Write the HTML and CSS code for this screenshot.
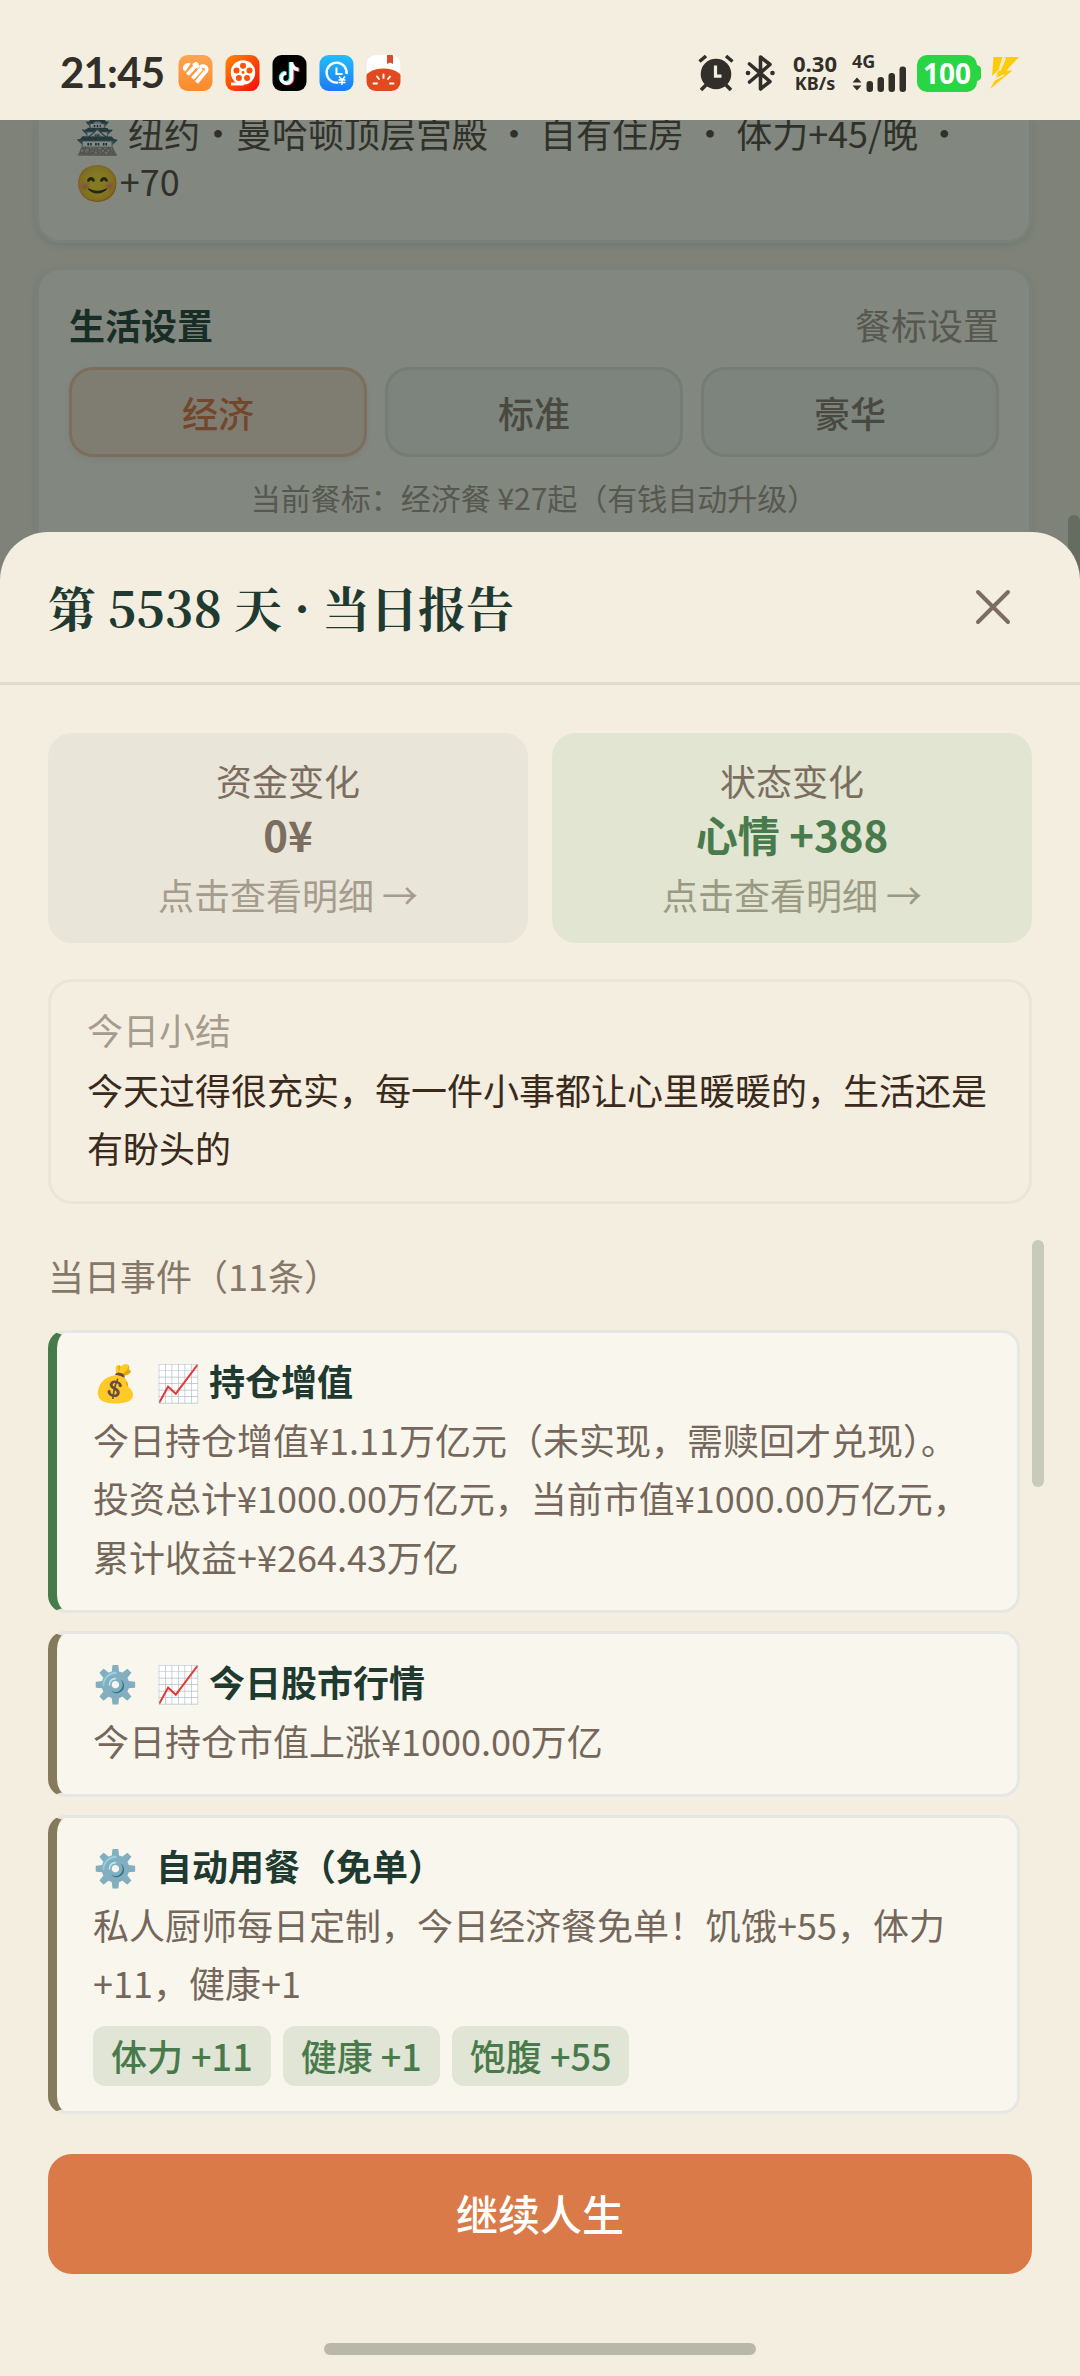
FILE: index.html
```html
<!DOCTYPE html>
<html lang="zh-CN">
<head>
<meta charset="utf-8">
<title>当日报告</title>
<link rel="stylesheet" href="styles.css">
</head>
<body>
<div class="screen">
  <header class="status">
    <div class="status-left">
      <span class="clock">21:45</span>
      <svg class="app" viewBox="0 0 34 36"><defs><linearGradient id="a1" x1="0" y1="0" x2="0" y2="1"><stop offset="0" stop-color="#fda550"/><stop offset="1" stop-color="#fb8a2b"/></linearGradient></defs><rect width="34" height="36" rx="9" fill="url(#a1)"/><path d="M4.500 14C4 10 8 7 12 8.500L7 16.500C5.500 15.500 4.700 15 4.500 14z" fill="#fff"/><path d="M9 19.500L16.500 11.500M14 23.500L23 13.500M18 27.500L27 16.500" stroke="#fff" stroke-width="4" fill="none"/><path d="M15 10.500c3-3.500 4.500-.5 3 2.500M21.500 12.500c3-3.500 9.500 0 5.500 5" stroke="#fff" stroke-width="3.600" fill="none"/></svg>
      <svg class="app" viewBox="0 0 34 36"><defs><linearGradient id="a2" x1="0" y1="0" x2="1" y2="1"><stop offset="0" stop-color="#ff8a00"/><stop offset="1" stop-color="#f80a0a"/></linearGradient></defs><rect width="34" height="36" rx="9" fill="url(#a2)"/><circle cx="17.500" cy="17.500" r="12.200" fill="#fff"/><path d="M5.500 29H18" stroke="#fff" stroke-width="3"/><g fill="#fb5205"><circle cx="17.500" cy="10.800" r="3"/><circle cx="24" cy="15.400" r="3"/><circle cx="21.600" cy="23" r="3"/><circle cx="13.400" cy="23" r="3"/><circle cx="11" cy="15.400" r="3"/><circle cx="17.500" cy="17.500" r="1.400"/></g></svg>
      <svg class="app" viewBox="0 0 34 36"><rect width="34" height="36" rx="9" fill="#000"/><g fill="none" stroke-width="3.600"><path d="M18 7v16a5 5 0 1 1-5-5.500M18 8c.8 4 3.500 6 7.500 6.500" stroke="#2af0ea"/><path d="M20 8.500v16a5 5 0 0 1-8 3M20 9c.8 4 3.500 6 7 6.500" stroke="#fe2c55"/><path d="M19 7v16.500a5 5 0 1 1-5-5.200M19 8c.8 4 3.500 6.200 7 6.500" stroke="#fff"/></g></svg>
      <svg class="app" viewBox="0 0 34 36"><defs><linearGradient id="a4" x1="0" y1="0" x2="0" y2="1"><stop offset="0" stop-color="#22bdfb"/><stop offset="1" stop-color="#1b7bf4"/></linearGradient></defs><rect width="34" height="36" rx="9" fill="url(#a4)"/><path d="M18.500 27.500A10 10 0 1 1 27 19" fill="none" stroke="#fff" stroke-width="2.400"/><path d="M17 12.500V19h6" fill="none" stroke="#fff" stroke-width="2"/><path d="M19.500 21.500l3 3.500 3-3.500M22.500 25v5M19 25h7M19 27.500h7" stroke="#fff" stroke-width="1.500" fill="none"/></svg>
      <svg class="app" viewBox="0 0 34 36"><defs><clipPath id="c5"><rect width="34" height="36" rx="9"/></clipPath></defs><g clip-path="url(#c5)"><rect width="34" height="36" fill="#fff"/><ellipse cx="17" cy="28" rx="21" ry="14.500" fill="#e04a1e"/><path d="M20.500 0h6v9l-3-1.500-3 1.500z" fill="#dc4a2c"/><path d="M17 19.500v3.500M10.500 21.500l2 2.500M23.500 21.500l-2 2.500M7 28.500h3.500M27 28.500h-3.500" stroke="#fff" stroke-width="1.900" stroke-linecap="round"/></g></svg>
    </div>
    <div class="status-right">
      <svg class="alarm" viewBox="0 0 36 38"><circle cx="18" cy="20" r="15.300" fill="#322e29"/><path d="M1.500 7.500L8 2M34.500 7.500L28 2M8 31l-5 5M28 31l5 5" stroke="#322e29" stroke-width="3.600"/><path d="M17.500 11.500v10.700h6" fill="none" stroke="#f4eee0" stroke-width="3.200"/></svg>
      <svg class="bt" viewBox="0 0 30 38"><path d="M4.500 10L25 27.500 15.500 35V3L25 10.500 4.500 28" fill="none" stroke="#322e29" stroke-width="3.600" stroke-linejoin="round" stroke-linecap="round"/><circle cx="3" cy="19" r="2.300" fill="#322e29"/><circle cx="27.500" cy="19" r="2.300" fill="#322e29"/></svg>
      <div class="speed"><b>0.30</b><span>KB/s</span></div>
      <div class="net"><b>4G</b><svg viewBox="0 0 56 27"><path d="M.500 17.500L5 12.500l4.500 5zM.500 20.500L5 25.500l4.500-5z" fill="#322e29"/><g fill="#322e29"><rect x="14.500" y="16" width="6.500" height="11" rx="3"/><rect x="25.500" y="12" width="6.500" height="15" rx="3"/><rect x="36.500" y="8" width="6.500" height="19" rx="3"/><rect x="47.500" y="1.500" width="6.500" height="25.500" rx="3"/></g></svg></div>
      <div class="battery">100</div>
      <svg class="nub" viewBox="0 0 4 16"><path d="M0 0q4 1 4 4v8q0 3-4 4z" fill="#27d545"/></svg>
      <svg class="bolt" viewBox="0 0 30 32"><path d="M3.500 0h9L8.500 13 2 19zM15 0h14L16.500 13.500h6L0 32 8.500 17 5.500 20z" fill="#fccc0c"/><path d="M15.500 1L9.500 14M4 23l10-5" stroke="#f4eee0" stroke-width="1.600"/></svg>
    </div>
  </header>

  <main class="page">
    <section class="panel home">
      <p>🏯 纽约・曼哈顿顶层宫殿 ・ 自有住房 ・ 体力+45/晚 ・ 😊+70</p>
    </section>
    <section class="panel life">
      <div class="life-head"><b>生活设置</b><span>餐标设置</span></div>
      <div class="tiers"><button class="tier active">经济</button><button class="tier">标准</button><button class="tier">豪华</button></div>
      <p class="tier-note">当前餐标：经济餐 ¥27起（有钱自动升级）</p>
    </section>
    <div class="veil"></div>
    <i class="page-bar"></i>
  </main>

  <section class="sheet">
    <header class="sheet-head">
      <h1>第 5538 天 · 当日报告</h1>
      <svg class="close" viewBox="0 0 36 36"><path d="M3 3l30 30M33 3L3 33" stroke="#7b6d60" stroke-width="4" stroke-linecap="round"/></svg>
    </header>
    <div class="sheet-body">
      <div class="stats">
        <div class="stat"><span>资金变化</span><b>0¥</b><em>点击查看明细 →</em></div>
        <div class="stat good"><span>状态变化</span><b>心情 +388</b><em>点击查看明细 →</em></div>
      </div>
      <div class="summary"><span>今日小结</span><p>今天过得很充实，每一件小事都让心里暖暖的，生活还是有盼头的</p></div>
      <div class="events">
        <h2>当日事件（11条）</h2>
        <article class="event gain">
          <h3><span class="emoji">💰</span>📈 持仓增值</h3>
          <p>今日持仓增值¥1.11万亿元（未实现，需赎回才兑现）。投资总计¥1000.00万亿元，当前市值¥1000.00万亿元，累计收益+¥264.43万亿</p>
        </article>
        <article class="event">
          <h3><span class="emoji">⚙️</span>📈 今日股市行情</h3>
          <p>今日持仓市值上涨¥1000.00万亿</p>
        </article>
        <article class="event">
          <h3><span class="emoji">⚙️</span>自动用餐（免单）</h3>
          <p>私人厨师每日定制，今日经济餐免单！饥饿+55，体力+11，健康+1</p>
          <div class="chips"><span>体力 +11</span><span>健康 +1</span><span>饱腹 +55</span></div>
        </article>
        <i class="events-bar"></i>
      </div>
      <button class="go">继续人生</button>
    </div>
    <i class="home-bar"></i>
  </section>
</div>
</body>
</html>
```
FILE: styles.css
```css
* { box-sizing: border-box; margin: 0; padding: 0; }
body { background: #f4eee0; font-family: "Noto Sans CJK SC", "Noto Color Emoji", sans-serif; font-size: 36px; color: #3a2a1c; }
b, h1, h2, h3 { font-weight: 700; }
em, i { font-style: normal; display: block; }
button { font: inherit; border: 0; }
svg { display: block; flex: none; }
.screen { width: 1080px; height: 2376px; overflow: hidden; display: flex; flex-direction: column; }

.status { height: 120px; flex: none; display: flex; justify-content: space-between; align-items: center; padding: 26px 60px 0 60px; color: #322e29; }
.status-left { display: flex; align-items: center; gap: 12px; }
.clock { font: 700 42px/1 Lato, sans-serif; width: 106px; letter-spacing: -.8px; padding-bottom: 2px; }
.app { width: 35px; height: 36px; }
.status-right { display: flex; align-items: center; }
.alarm { width: 36px; height: 38px; margin-right: 11px; }
.bt { width: 30px; height: 38px; margin-right: 17px; }
.speed { width: 46px; display: flex; flex-direction: column; align-items: center; margin-right: 14px; font: 700 18px/20px "Noto Sans", sans-serif; }
.speed b { font-size: 22px; line-height: 20px; }
.net { width: 56px; margin-right: 9px; height: 38px; }
.net b { display: block; font: 700 18px/14px "Noto Sans", sans-serif; height: 11px; }
.net svg { width: 56px; height: 27px; }
.battery { width: 60px; height: 37px; border-radius: 10px; background: #27d545; color: #fff; font: 700 28px/37px "Noto Sans", sans-serif; text-align: center; }
.nub { width: 4px; height: 16px; margin-right: 9px; }
.bolt { width: 30px; height: 32px; }

.page { position: relative; height: 460px; margin-bottom: -48px; flex: none; overflow: hidden; background: #f4eee0; padding: 0 48px 0 36px; display: flex; flex-direction: column; gap: 24px; }
.panel { border: 3px solid #e9ece8; border-radius: 24px; background: #faf8ee; box-shadow: 0 3px 6px rgba(60, 80, 70, .12); }
.home { height: 123px; flex: none; border-top: 0; border-radius: 0 0 24px 24px; padding: 0 36px; color: #50463c; }
.home p { line-height: 48px; margin-top: -12px; }
.life { height: 360px; flex: none; padding: 27px 30px; }
.life-head { display: flex; justify-content: space-between; line-height: 54px; color: #a0978b; }
.life-head b { color: #1f3d33; }
.tiers { display: grid; grid-template-columns: repeat(3, 1fr); gap: 18px; margin-top: 16px; }
.tier { height: 90px; padding-bottom: 1px; border-radius: 24px; border: 3px solid #dde2da; background: #f0f2ea; color: #85786b; font-weight: 500; }
.tier.active { background: #f4e4d2; border-color: #efc3a5; color: #d9743f; box-shadow: 0 3px 6px rgba(60, 80, 70, .08); }
.tier-note { font-size: 30px; line-height: 45px; margin-top: 18px; text-align: center; color: #a0978b; }
.veil { position: absolute; inset: 0; background: rgba(20, 30, 25, .52); }
.page-bar { position: absolute; right: 0; top: 395px; width: 12px; height: 200px; border-radius: 6px; background: #656d62; }

.sheet { position: relative; flex: 1; background: #f4eee0; border-radius: 48px 48px 0 0; }
.sheet-head { height: 153px; border-bottom: 3px solid #e2dace; display: flex; justify-content: space-between; align-items: center; padding: 0 69px 1px 48px; }
.sheet-head h1 { font: 700 48px/60px "Noto Serif CJK SC", "Noto Serif SC", serif; color: #1f3a30; }
.close { width: 36px; height: 36px; }
.sheet-body { padding: 48px 48px 0; }
.stats { display: grid; grid-template-columns: 1fr 1fr; gap: 24px; }
.stat { height: 210px; border-radius: 24px; background: #eae5d9; display: flex; flex-direction: column; align-items: center; padding-top: 20px; color: #7b6d60; }
.stat span { line-height: 54px; }
.stat b { font-size: 42px; line-height: 54px; }
.stat em { line-height: 54px; margin-top: 6px; color: #a59c8e; }
.stat.good { background: #e1e5d1; }
.stat.good b { color: #497a4b; }
.stat.good em { color: #9a9a82; }
.summary { margin-top: 36px; height: 225px; border: 3px solid #ebe4d7; border-radius: 24px; padding: 20px 36px; }
.summary span { display: block; line-height: 54px; color: #a69c8e; }
.summary p { line-height: 58px; margin-top: 4px; }

.events { position: relative; margin-top: 36px; height: 873px; padding-right: 12px; display: flex; flex-direction: column; gap: 18px; }
.events h2 { font-size: 36px; font-weight: 400; line-height: 54px; margin-top: 8px; color: #857869; padding-bottom: 10px; }
.event { flex: none; border: 3px solid #e6e7e4; border-left: 9px solid #857a5c; border-radius: 18px; background: #f9f7ed; padding: 17px 36px 25px; color: #75675b; }
.event.gain { border-left-color: #467b4a; }
.event h3 { font-size: 36px; line-height: 60px; height: 59.500px; color: #1f3a30; display: flex; white-space: pre; }
.emoji { width: 63px; }
.event p { line-height: 58.500px; }
.chips { display: flex; gap: 12px; margin-top: 14px; }
.chips span { height: 60px; line-height: 58px; padding: 0 18px; border-radius: 12px; background: #e0e5d5; color: #497a4b; font-weight: 500; }
.events-bar { position: absolute; left: 984px; top: 0; width: 12px; height: 247px; border-radius: 6px; background: #c8cbbc; }
.go { display: block; width: 100%; height: 120px; margin-top: 41px; padding-bottom: 4px; border-radius: 24px; background: #d97a48; color: #fff; font-size: 42px; font-weight: 500; }
.home-bar { width: 432px; height: 12px; border-radius: 6px; background: #b9b7a9; margin: 69px auto 0; }
```
